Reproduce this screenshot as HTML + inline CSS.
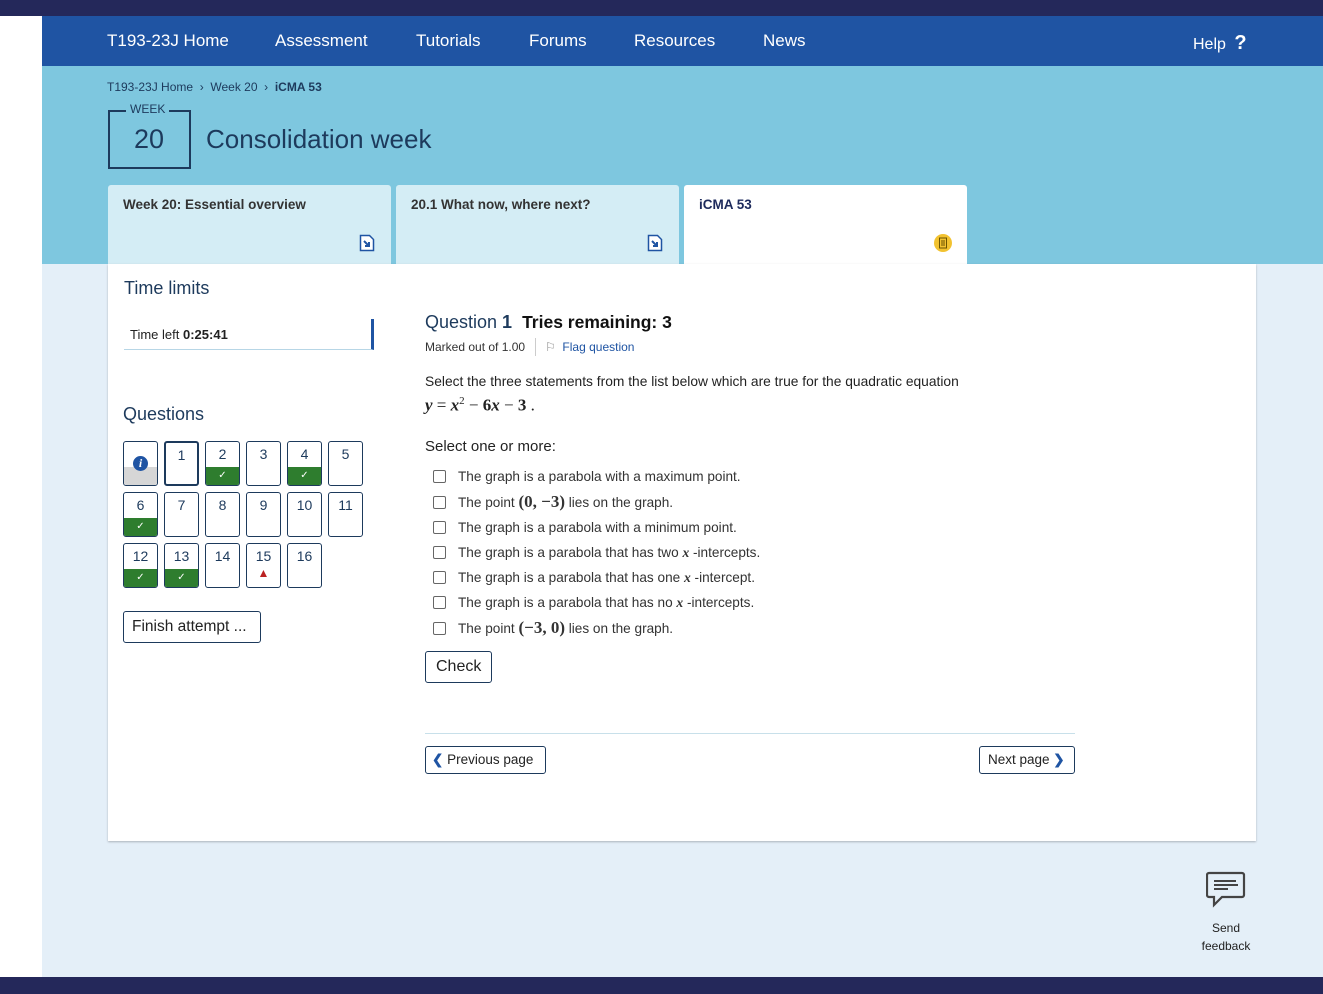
<!DOCTYPE html>
<html><head><meta charset="utf-8"><style>
*{box-sizing:border-box;margin:0;padding:0}
body{width:1323px;height:994px;position:relative;overflow:hidden;background:#fff;font-family:"Liberation Sans",Arial,sans-serif;color:#222}
.a{position:absolute}
.nav a{position:absolute;top:15px;color:#fff;font-size:17px;text-decoration:none}
.tab{position:absolute;top:185px;width:283px;height:79px;background:#d4edf5;border-radius:3px 3px 0 0;padding:12px 15px;font-size:13.5px;font-weight:bold;color:#333}
.q{position:absolute;width:35px;height:45px;border:1px solid #1d3a5c;border-radius:3px;background:#fff;text-align:center;font-size:14px;color:#1d3a5c;padding-top:4px;overflow:hidden}
.q .ok{position:absolute;left:0;right:0;bottom:0;height:18px;background:#2e7d2e;color:#fff;font-size:10px;line-height:18px}
.btn{position:absolute;border:1px solid #1d3a5c;border-radius:3px;background:#fff;color:#222;font-size:16px;white-space:nowrap;overflow:hidden}
.opt{position:absolute;left:433px;font-size:13.6px;color:#333;white-space:nowrap}
.opt span.cb{display:inline-block;width:13px;height:13px;border:1px solid #666;border-radius:2px;vertical-align:-2px;margin-right:12px;background:#fff}
.m{font-family:"Liberation Serif",serif;font-style:italic;font-weight:bold}
.mb{font-family:"Liberation Serif",serif;font-weight:bold;font-size:17px}
</style></head><body>
<div class="a" style="left:0;top:0;width:1323px;height:16px;background:#24285a"></div>
<div class="a nav" style="left:42px;top:16px;width:1281px;height:50px;background:#1f54a3">
<a style="left:65px">T193-23J Home</a><a style="left:233px">Assessment</a><a style="left:374px">Tutorials</a><a style="left:487px">Forums</a><a style="left:592px">Resources</a><a style="left:721px">News</a>
<a style="left:1151px;top:16px;font-size:16px">Help <b style="font-size:20px;margin-left:4px">?</b></a>
</div>
<div class="a" style="left:42px;top:66px;width:1281px;height:198px;background:#7ec7df"></div>
<div class="a" style="left:42px;top:264px;width:1281px;height:713px;background:#e4eff8"></div>
<div class="a" style="left:0;top:977px;width:1323px;height:17px;background:#24285a"></div>
<div class="a" style="left:107px;top:80px;font-size:12px;color:#1d3a5c">T193-23J Home &nbsp;›&nbsp; Week 20 &nbsp;›&nbsp; <b>iCMA 53</b></div>
<div class="a" style="left:108px;top:110px;width:83px;height:59px;border:2px solid #1d3a5c"></div>
<div class="a" style="left:126px;top:102px;padding:0 4px;background:#7ec7df;font-size:12px;color:#1d3a5c">WEEK</div>
<div class="a" style="left:134px;top:124px;font-size:27px;color:#1d3a5c">20</div>
<div class="a" style="left:206px;top:124px;font-size:26px;color:#1d3a5c">Consolidation week</div>
<div class="tab" style="left:108px">Week 20: Essential overview</div>
<div class="tab" style="left:396px">20.1 What now, where next?</div>
<div class="tab" style="left:684px;background:#fff;color:#1d2a5c">iCMA 53</div>
<svg class="a" style="left:359px;top:234px" width="16" height="18"><path d="M1.5 1.5h9l4 4v11h-13z" fill="#fff" stroke="#1f54a3" stroke-width="1.5"/><path d="M5 7l5 5M10 8v4H6" stroke="#1f54a3" stroke-width="2" fill="none"/></svg>
<svg class="a" style="left:647px;top:234px" width="16" height="18"><path d="M1.5 1.5h9l4 4v11h-13z" fill="#fff" stroke="#1f54a3" stroke-width="1.5"/><path d="M5 7l5 5M10 8v4H6" stroke="#1f54a3" stroke-width="2" fill="none"/></svg>
<svg class="a" style="left:934px;top:234px" width="18" height="18"><circle cx="9" cy="9" r="9" fill="#f2c230"/><rect x="5.5" y="4" width="7" height="10" fill="none" stroke="#6b5300" stroke-width="1"/><path d="M7 7h4M7 9h4M7 11h4" stroke="#6b5300"/></svg>
<div class="a" style="left:108px;top:264px;width:1148px;height:577px;background:#fff;box-shadow:0 1px 2px rgba(0,0,0,.25)"></div>
<div class="a" style="left:124px;top:278px;font-size:18px;color:#1d3a5c">Time limits</div>
<div class="a" style="left:124px;top:319px;width:250px;height:31px;border-bottom:1px solid #b7d6e6;border-right:3px solid #1f54a3;padding:8px 6px;font-size:13px;color:#222">Time left <b>0:25:41</b></div>
<div class="a" style="left:123px;top:404px;font-size:18px;color:#1d3a5c">Questions</div>
<div class="q" style="left:123px;top:441px;padding-top:12px"><span style="display:inline-block;width:15px;height:15px;border-radius:50%;background:#1f54a3;color:#fff;font:italic bold 12px 'Liberation Serif',serif;line-height:15px;position:relative;z-index:1">i</span><div class="ok" style="background:#d6d6d6"></div></div>
<div class="q" style="left:164px;top:441px;border:2px solid #1d3a5c">1</div>
<div class="q" style="left:205px;top:441px">2<div class="ok">✓</div></div>
<div class="q" style="left:246px;top:441px">3</div>
<div class="q" style="left:287px;top:441px">4<div class="ok">✓</div></div>
<div class="q" style="left:328px;top:441px">5</div>
<div class="q" style="left:123px;top:492px">6<div class="ok">✓</div></div>
<div class="q" style="left:164px;top:492px">7</div>
<div class="q" style="left:205px;top:492px">8</div>
<div class="q" style="left:246px;top:492px">9</div>
<div class="q" style="left:287px;top:492px">10</div>
<div class="q" style="left:328px;top:492px">11</div>
<div class="q" style="left:123px;top:543px">12<div class="ok">✓</div></div>
<div class="q" style="left:164px;top:543px">13<div class="ok">✓</div></div>
<div class="q" style="left:205px;top:543px">14</div>
<div class="q" style="left:246px;top:543px">15<div style="color:#b22;font-size:12px;margin-top:2px">▲</div></div>
<div class="q" style="left:287px;top:543px">16</div>
<div class="btn" style="left:123px;top:611px;width:138px;height:32px;padding:6px 8px;font-size:15.5px">Finish attempt ...</div>
<div class="a" style="left:425px;top:312px;font-size:18px;color:#1d3a5c;white-space:nowrap">Question <b>1</b> &nbsp;<b style="color:#111;font-size:17.5px">Tries remaining: 3</b></div>
<div class="a" style="left:425px;top:340px;font-size:12px;color:#333">Marked out of 1.00</div>
<div class="a" style="left:535px;top:338px;width:1px;height:18px;background:#ccc"></div>
<div class="a" style="left:545px;top:340px;font-size:12px;color:#1f54a3"><span style="color:#888">⚐</span> &nbsp;Flag question</div>
<div class="a" style="left:425px;top:374px;font-size:13.8px;color:#222;white-space:nowrap">Select the three statements from the list below which are true for the quadratic equation</div>
<div class="a" style="left:425px;top:395px;font-size:17px;font-family:'Liberation Serif',serif"><span class="m">y</span> = <span class="m">x</span><sup style="font-size:11px">2</sup> − <b>6</b><span class="m">x</span> − <b>3</b> .</div>
<div class="a" style="left:425px;top:438px;font-size:15px;color:#222">Select one or more:</div>
<div class="opt" style="top:469px"><span class="cb"></span>The graph is a parabola with a maximum point.</div>
<div class="opt" style="top:492px"><span class="cb"></span>The point <span class="mb">(0, −3)</span> lies on the graph.</div>
<div class="opt" style="top:520px"><span class="cb"></span>The graph is a parabola with a minimum point.</div>
<div class="opt" style="top:545px"><span class="cb"></span>The graph is a parabola that has two <span class="m">x</span> -intercepts.</div>
<div class="opt" style="top:570px"><span class="cb"></span>The graph is a parabola that has one <span class="m">x</span> -intercept.</div>
<div class="opt" style="top:595px"><span class="cb"></span>The graph is a parabola that has no <span class="m">x</span> -intercepts.</div>
<div class="opt" style="top:618px"><span class="cb"></span>The point <span class="mb">(−3, 0)</span> lies on the graph.</div>
<div class="btn" style="left:425px;top:651px;width:67px;height:32px;padding:6px 10px">Check</div>
<div class="a" style="left:425px;top:733px;width:650px;height:1px;background:#c8e0ea"></div>
<div class="btn" style="left:425px;top:746px;width:121px;height:28px;padding:5px 6px;font-size:13.5px"><b style="color:#1f54a3">❮</b> Previous page</div>
<div class="btn" style="left:979px;top:746px;width:96px;height:28px;padding:5px 8px;font-size:13.5px">Next page <b style="color:#1f54a3">❯</b></div>
<svg class="a" style="left:1206px;top:871px" width="40" height="38"><path d="M3 2h33a2 2 0 0 1 2 2v20a2 2 0 0 1-2 2H16l-8 8v-8H3a2 2 0 0 1-2-2V4a2 2 0 0 1 2-2z" fill="none" stroke="#444" stroke-width="2.2"/><path d="M8 10h22M8 14h24M8 18h14" stroke="#444" stroke-width="2"/></svg>
<div class="a" style="left:1190px;top:919px;width:72px;text-align:center;font-size:12px;line-height:18px;color:#222">Send feedback</div>
</body></html>
